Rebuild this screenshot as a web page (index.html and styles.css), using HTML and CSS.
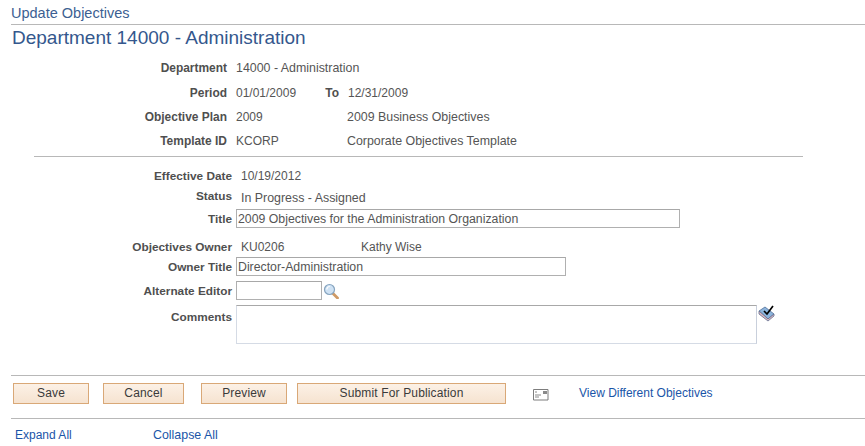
FILE: index.html
```html
<!DOCTYPE html>
<html lang="en">
<head>
<meta charset="utf-8">
<title>Update Objectives</title>
<link rel="stylesheet" href="styles.css">
</head>
<body>
<header class="page-head">
  <div class="crumb">Update Objectives</div>
  <h1 class="title">Department 14000 - Administration</h1>
</header>
<section class="summary">
  <div class="row"><span class="label">Department</span><span class="val">14000 - Administration</span></div>
  <div class="row"><span class="label">Period</span><span class="val plain col-a">01/01/2009</span><span class="label to">To</span><span class="val plain">12/31/2009</span></div>
  <div class="row"><span class="label">Objective Plan</span><span class="val plain col-b">2009</span><span class="val">2009 Business Objectives</span></div>
  <div class="row"><span class="label">Template ID</span><span class="val plain col-b">KCORP</span><span class="val">Corporate Objectives Template</span></div>
</section>
<hr class="divider">
<section class="details">
  <div class="row r-date"><span class="label">Effective Date</span><span class="val plain">10/19/2012</span></div>
  <div class="row r-status"><span class="label">Status</span><span class="val">In Progress - Assigned</span></div>
  <div class="row r-title"><span class="label">Title</span><input class="field wide" value="2009 Objectives for the Administration Organization"></div>
  <div class="row r-owner"><span class="label">Objectives Owner</span><span class="val plain owner-id">KU0206</span><span class="val plain">Kathy Wise</span></div>
  <div class="row r-ownertitle"><span class="label">Owner Title</span><input class="field mid" value="Director-Administration"></div>
  <div class="row r-editor"><span class="label">Alternate Editor</span><input class="field small">
    <svg class="lookup" width="16" height="16" viewBox="0 0 16 16"><path d="M9.500 10 14.500 15" stroke="#cf9a66" stroke-width="2.800" stroke-linecap="round"/><circle cx="6.500" cy="6.500" r="5" fill="#cfe2f4" stroke="#86a4bf" stroke-width="1.200"/><path d="M3.800 6.500a3 3 0 0 1 3-3" fill="none" stroke="#fff" stroke-width="1.200"/></svg>
  </div>
  <div class="row r-comments"><span class="label">Comments</span><textarea class="notes"></textarea>
    <svg class="spell" width="17" height="17" viewBox="0 0 17 17"><path d="M1 6 7 2 16 9 10 14Z" fill="#8db4dc" stroke="#4f6f99" stroke-width=".8"/><path d="M1 6V9L10 16 16 11V9L10 14Z" fill="#e3b9c0" stroke="#5f6f90" stroke-width=".8"/><path d="M6 6 9 9 15 1" fill="none" stroke="#000" stroke-width="1.700"/></svg>
  </div>
</section>
<footer class="foot">
  <div class="actions">
    <button class="btn b-save">Save</button>
    <button class="btn b-cancel">Cancel</button>
    <button class="btn b-preview">Preview</button>
    <button class="btn b-submit">Submit For Publication</button>
    <svg class="notify" width="16" height="12" viewBox="0 0 16 12"><path d="M.5.5h14.500v10.500H.5Z" fill="#fff" stroke="#7d7d7d"/><path d="M10 2h4v3h-4Z" fill="#8a8a8a"/><path d="M2 3h2M2 6h6M2 8h4" stroke="#8a8a8a"/></svg>
    <a class="link view" href="#">View Different Objectives</a>
  </div>
  <div class="toggles">
    <a class="link expand" href="#">Expand All</a>
    <a class="link wider" href="#">Collapse All</a>
  </div>
</footer>
</body>
</html>
```
FILE: styles.css
```css
* { box-sizing: border-box; }
html, body { margin: 0; padding: 0; }
body {
  width: 865px;
  height: 446px;
  overflow: hidden;
  background: #fff;
  font: 12px/14px "Liberation Sans", Arial, sans-serif;
  color: #555;
}
.page-head { padding: 5px 0 0 11px; }
.crumb {
  height: 20px;
  font-size: 14.5px;
  line-height: 17px;
  color: #3c5f92;
  border-bottom: 1px solid #b8b8b8;
}
.title {
  margin: 1px 0 0 1px;
  font-size: 19px;
  font-weight: normal;
  line-height: 23px;
  color: #34578d;
}
.summary { margin-top: 7px; }
.row { display: flex; align-items: center; }
.summary .row { height: 24.4px; }
.label {
  flex: none;
  width: 227px;
  text-align: right;
  font-weight: bold;
  font-size: 11.95px;
  color: #4f4f4f;
}
.details .label { width: 232px; font-size: 11.8px; }
.val { flex: none; margin-left: 9px; font-size: 12.4px; }
.val.plain { font-size: 12px; }
.col-a { width: 79px; }
.col-b { width: 102px; }
.label.to { width: 24px; margin-left: 0; }
.divider {
  width: 769px;
  height: 1px;
  margin: 2px 0 0 34px;
  border: 0;
  background: #b8b8b8;
}
.details { margin-top: 8px; }
.owner-id { width: 111px; }
.r-date { height: 22px; }
.r-status { height: 21px; align-items: flex-start; }
.r-status .label { margin-top: 2px; }
.r-status .val { margin-top: 4px; }
.r-title { height: 22px; }
.r-owner { height: 19px; margin-top: 8px; }
.r-ownertitle { height: 20px; }
.r-editor { height: 20px; margin-top: 4px; }
.r-comments { height: 40px; margin-top: 4px; align-items: flex-start; }
.r-comments .label { margin-top: 5px; }
.field {
  display: block;
  flex: none;
  margin: 0 0 0 4px;
  padding: 0 1px;
  border: 1px solid #b0b0b0;
  border-top-color: #a8a8a8;
  background: #fff;
  font: inherit;
  font-size: 12.3px;
  color: #555;
  outline: none;
}
.wide { width: 444px; height: 19px; }
.mid { width: 330px; height: 19px; }
.small { width: 86px; height: 19px; }
.lookup { flex: none; margin-left: 1px; }
.notes {
  display: block;
  flex: none;
  width: 521px;
  height: 39px;
  margin: 0 0 0 4px;
  border: 1px solid #d5dbe5;
  border-top-color: #a8a8a8;
  border-right-color: #c9d0dc;
  background: #fff;
  resize: none;
  outline: none;
}
.spell { flex: none; margin-left: 1px; }
.foot { margin-top: 30px; margin-left: 11px; }
.actions {
  display: flex;
  align-items: flex-start;
  height: 44px;
  padding: 7px 0 0 2px;
  border-top: 1px solid #b8b8b8;
  border-bottom: 1px solid #b8b8b8;
}
.btn {
  flex: none;
  height: 21px;
  padding: 0;
  border: 1px solid #d9a877;
  background: linear-gradient(#fcf1e6, #f6e3d0);
  font: 12px/14px "Liberation Sans", Arial, sans-serif;
  letter-spacing: .15px;
  color: #3a3a3a;
}
.b-save { width: 76px; margin-right: 14px; }
.b-cancel { width: 81px; margin-right: 17px; }
.b-preview { width: 86px; margin-right: 10px; }
.b-submit { width: 209px; }
.notify { flex: none; margin: 6px 0 0 27px; }
.link { color: #1a55a8; text-decoration: none; }
.view { margin: 3px 0 0 30px; }
.toggles { display: flex; padding: 9px 0 0 4px; }
.expand { width: 138px; }
.wider { font-size: 12.4px; }
```
